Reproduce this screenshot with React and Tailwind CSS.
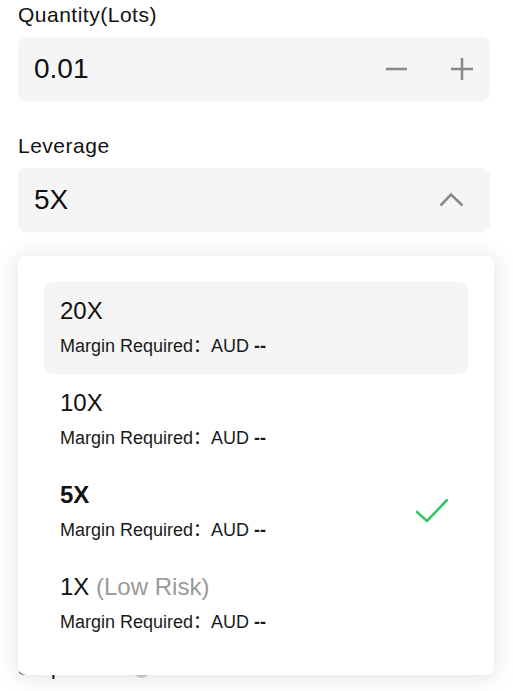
import React from "react";

const font = { fontFamily: '"Liberation Sans", "Noto Sans CJK SC", Arial, sans-serif' };

function Item({ title, selected, highlighted }) {
  return (
    <div
      className={`flex items-center justify-between rounded-lg pl-4 pr-5 pt-[13px] pb-4 ${
        highlighted ? "bg-[#f5f5f5]" : ""
      }`}
    >
      <div>
        <div className={`text-[24px] leading-8 text-[#111] ${selected ? "font-bold" : ""}`}>{title}</div>
        <div className="mt-[7px] text-[18px] leading-6 text-[#1a1a1a]">
          Margin Required：AUD <span className="font-bold">--</span>
        </div>
      </div>
      {selected && (
        <svg width="32" height="24" viewBox="0 0 32 24" fill="none">
          <polyline
            points="1,13 11,22 31,1"
            stroke="#3ac565"
            strokeWidth="2.6"
            strokeLinecap="round"
            strokeLinejoin="round"
          />
        </svg>
      )}
    </div>
  );
}

export default function App() {
  return (
    <div className="relative h-[691px] w-[513px] overflow-hidden bg-white" style={font}>
      <div className="px-[18px] pt-px pr-[23px]">
        <div className="text-[21px] leading-7 tracking-[0.5px] text-[#111]">Quantity(Lots)</div>
        <div className="mt-2 flex h-16 items-center justify-between rounded-lg bg-[#f5f5f5] pl-4 pr-4">
          <span className="text-[28px] text-[#111]">0.01</span>
          <div className="flex items-center gap-[42px]">
            <svg width="23" height="24" viewBox="0 0 23 24">
              <line x1="1" y1="12" x2="22" y2="12" stroke="#8a8a8a" strokeWidth="2.6" />
            </svg>
            <svg width="24" height="24" viewBox="0 0 24 24">
              <line x1="1" y1="12" x2="23" y2="12" stroke="#8a8a8a" strokeWidth="2.6" />
              <line x1="12" y1="1" x2="12" y2="23" stroke="#8a8a8a" strokeWidth="2.6" />
            </svg>
          </div>
        </div>

        <div className="mt-[31px] text-[21px] leading-7 tracking-[0.5px] text-[#111]">Leverage</div>
        <div className="mt-2 flex h-16 items-center justify-between rounded-lg bg-[#f5f5f5] pl-4 pr-[25px]">
          <span className="text-[28px] text-[#111]">5X</span>
          <svg width="26" height="16" viewBox="0 0 26 16">
            <polyline
              points="1.5,13.5 12,2.5 23.5,13.5"
              fill="none"
              stroke="#8a8a8a"
              strokeWidth="2.6"
              strokeLinejoin="miter"
            />
          </svg>
        </div>

        <div className="mt-[422px] flex items-center gap-[17px]">
          <span className="text-[21px] leading-7 tracking-[0.5px] text-[#111]">Stop Loss</span>
          <span className="mt-[3px] inline-block h-[17px] w-[17px] rounded-full bg-[#d0d0d0]" />
        </div>
      </div>

      <div className="absolute left-[18px] top-[256px] w-[476px] rounded-lg bg-white px-[26px] pt-[26px] pb-[25px] shadow-[0_2px_24px_rgba(0,0,0,0.13)]">
        <Item title="20X" highlighted />
        <Item title="10X" />
        <Item title="5X" selected />
        <Item
          title={
            <span>
              <span className="text-[#111]">1X</span> <span className="text-[#999]">(Low Risk)</span>
            </span>
          }
        />
      </div>
    </div>
  );
}
